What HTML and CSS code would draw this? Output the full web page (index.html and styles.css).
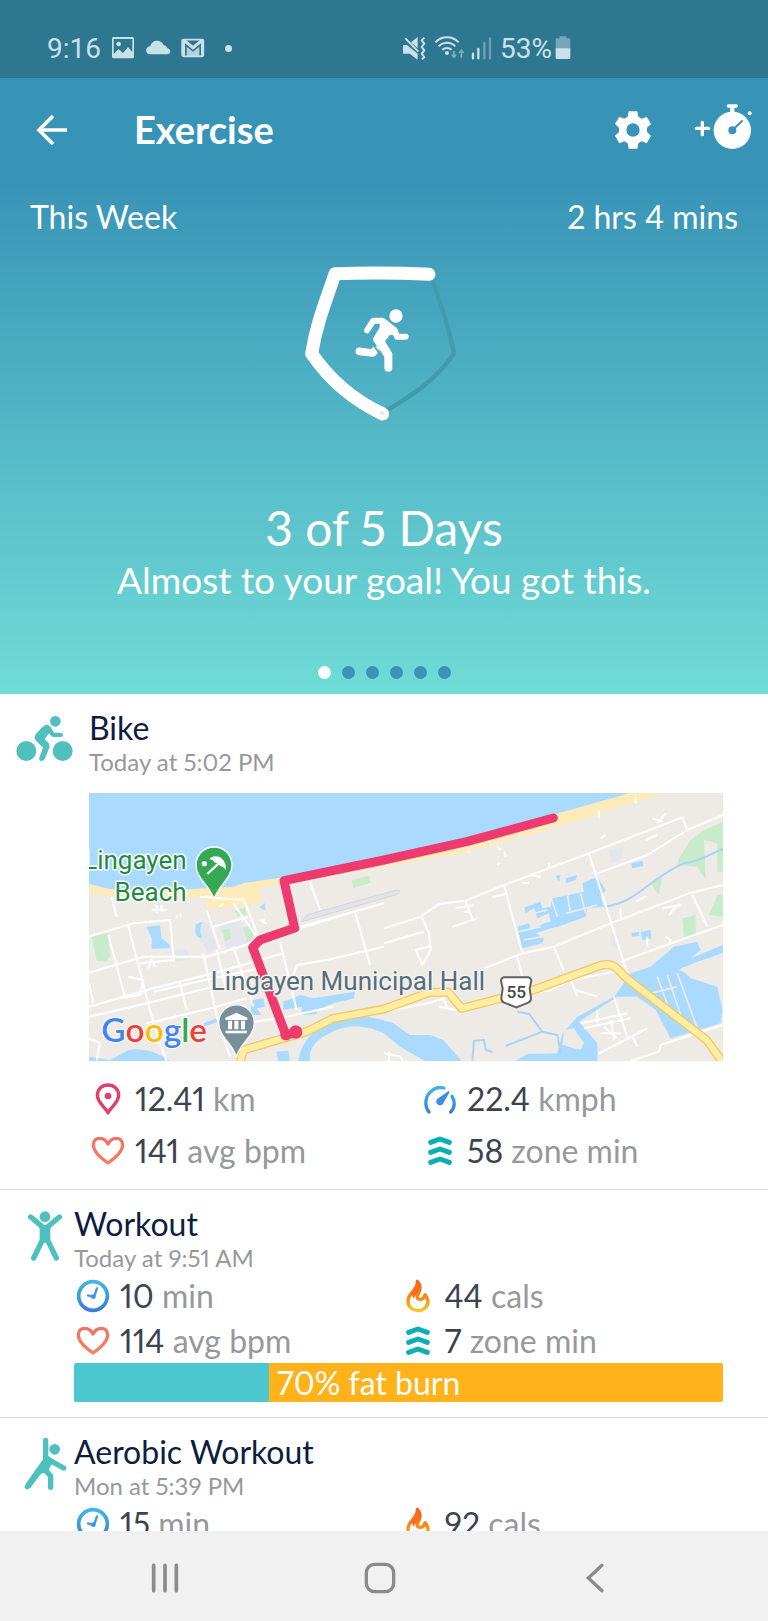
FILE: index.html
```html
<!DOCTYPE html>
<html lang="en">
<head>
    <meta charset="UTF-8">
    <meta name="viewport" content="width=device-width, initial-scale=1.0">
    <title>Exercise</title>
    <link rel="stylesheet" href="styles.css">
</head>
<body>
    <!-- Shared icons and gradients -->
    <svg class="sprite" aria-hidden="true">
        <defs>
            <linearGradient id="blueGrad" x1="0" y1="0" x2="0" y2="1">
                <stop offset="0" stop-color="#41b4ec"/>
                <stop offset="1" stop-color="#3a7fd6"/>
            </linearGradient>
            <linearGradient id="fireGrad" x1="0" y1="0" x2="0" y2="1">
                <stop offset="0" stop-color="#f8601c"/>
                <stop offset="0.6" stop-color="#fb8c14"/>
                <stop offset="1" stop-color="#fcc41e"/>
            </linearGradient>
            <linearGradient id="heartGrad" x1="0" y1="0" x2="0" y2="1">
                <stop offset="0" stop-color="#ee7466"/>
                <stop offset="1" stop-color="#f9805c"/>
            </linearGradient>
        </defs>
        <symbol id="icon-clock" viewBox="0 0 114 114">
            <circle cx="57" cy="57" r="43" fill="none" stroke="url(#blueGrad)" stroke-width="11"/>
            <path d="M69 34L60 60L42 55" fill="none" stroke="#3f9be3" stroke-width="7" stroke-linecap="round" stroke-linejoin="round"/>
            <circle cx="58" cy="59" r="7" fill="#3f93e0"/>
        </symbol>
        <symbol id="icon-heart" viewBox="0 0 114 114">
            <path d="M57 93C44 84 13 62 13 39C13 26 21 19 32 19C43 19 52 25 57 36C62 25 71 19 82 19C93 19 101 26 101 39C101 62 70 84 57 93Z" fill="none" stroke="url(#heartGrad)" stroke-width="10" stroke-linejoin="round"/>
        </symbol>
        <symbol id="icon-zone" viewBox="0 0 114 114">
            <path d="M29 31L57 21L85 31M29 61L57 51L85 61M29 91L57 81L85 91" fill="none" stroke="#0aafb6" stroke-width="15" stroke-linecap="round" stroke-linejoin="round"/>
        </symbol>
        <symbol id="icon-fire" viewBox="0 0 114 114">
            <path d="M55 13C57 29 47 38 37 49C30 57 27 65 27 73C27 90 41 101 57 101C74 101 87 89 87 73C87 65 83 59 78 53C76 64 69 68 61 67C52 65 53 57 58 50C65 40 66 24 55 13Z" fill="none" stroke="url(#fireGrad)" stroke-width="10" stroke-linejoin="round"/>
            <path d="M55 13C57 29 47 38 37 49L44 65C48 53 57 50 60 42C65 32 62 20 55 13Z" fill="#f96c1a"/>
        </symbol>
        <symbol id="icon-pin" viewBox="0 0 114 114">
            <path d="M57 99C51 83 25 69 25 46C25 27 40 15 57 15C74 15 89 27 89 46C89 69 63 83 57 99Z" fill="none" stroke="#de3f6d" stroke-width="10" stroke-linejoin="round"/>
            <circle cx="57" cy="48" r="10" fill="#de3f6d"/>
        </symbol>
        <symbol id="icon-speed" viewBox="0 0 114 114">
            <path d="M24 96C10 78 12 52 27 37C39 25 54 20 69 24M93 49C103 64 102 83 89 96" fill="none" stroke="url(#blueGrad)" stroke-width="10" stroke-linecap="round"/>
            <path d="M83 36L66 66A9 9 0 1 1 51 58Z" fill="#3f8fe0" stroke="#3f8fe0" stroke-width="5" stroke-linejoin="round"/>
        </symbol>
    </svg>

    <header class="hero">
        <!-- Status bar -->
        <div class="status-bar">
            <div class="status-group status-left">
                <span>9:16</span>
                <svg width="24" height="24" viewBox="0 0 72 72">
                    <path fill="currentColor" fill-rule="evenodd" d="M6 3H64Q69 3 69 8V62Q69 67 64 67H8Q3 67 3 62V8Q3 3 8 3ZM8 9V54L23 39L36 51L51 33L64 48V9Z"/>
                    <circle cx="23" cy="24" r="7" fill="currentColor"/>
                </svg>
                <svg width="26" height="24" viewBox="0 0 78 72">
                    <path fill="currentColor" d="M16 55C-1 55 0 31 16 31C20 9 50 9 56 28C64 28 65 33 66 36C80 38 78 55 66 55Z"/>
                </svg>
                <svg width="24" height="24" viewBox="0 0 72 72">
                    <rect x="4" y="11" width="63" height="50" rx="4" fill="none" stroke="currentColor" stroke-width="5"/>
                    <path fill="currentColor" d="M2 10H12L36 29L60 10H68V60H60V22L36 41L12 22V60H2Z"/>
                    <path fill="currentColor" d="M17 32L36 47L55 32V62H17Z" opacity="0.85"/>
                </svg>
                <span class="status-dot"></span>
            </div>
            <div class="status-group status-right">
                <svg width="26" height="26" viewBox="0 0 78 78">
                    <path fill="currentColor" d="M6 30H18L50 56V74L26 56H6ZM30 22L50 6V40Z"/>
                    <path d="M13 10L52 50" stroke="currentColor" stroke-width="6"/>
                    <path d="M70 8L62 16L70 26L62 36L70 46L62 56L70 66L63 73" fill="none" stroke="currentColor" stroke-width="6" stroke-linejoin="round"/>
                </svg>
                <svg width="30" height="26" viewBox="0 0 90 78">
                    <path d="M4 22C24 2 54 2 74 22M14 34C28 20 50 20 64 34M25 44C33 37 45 37 53 44" fill="none" stroke="currentColor" stroke-width="6"/>
                    <circle cx="39" cy="54" r="6" fill="currentColor"/>
                    <path d="M60 48V66M53 59L60 67L67 59M82 68V48M75 54L82 46L89 54" fill="none" stroke="currentColor" stroke-width="5" opacity="0.5"/>
                </svg>
                <svg width="22" height="26" viewBox="0 0 66 78">
                    <path d="M6 56V70M22 42V70" stroke="currentColor" stroke-width="7" stroke-linecap="round"/>
                    <path d="M40 24V70M57 10V70" stroke="currentColor" stroke-width="7" stroke-linecap="round" opacity="0.4"/>
                </svg>
                <span>53%</span>
                <svg class="battery" width="16" height="26" viewBox="0 0 48 78">
                    <path fill="currentColor" opacity="0.45" d="M14 4H34V10H43Q46 10 46 13V42H2V13Q2 10 5 10H14Z"/>
                    <path fill="currentColor" d="M2 40H46V68Q46 72 42 72H6Q2 72 2 68Z"/>
                </svg>
            </div>
        </div>

        <!-- App bar -->
        <div class="app-bar">
            <button class="back-btn" type="button" aria-label="Back">
                <svg width="32" height="32" viewBox="0 0 96 96">
                    <path d="M93 48H10M51 6L9 48L51 90" fill="none" stroke="currentColor" stroke-width="11"/>
                </svg>
            </button>
            <h1>Exercise</h1>
            <button type="button" aria-label="Settings">
                <svg width="38" height="38" viewBox="0 0 114 114">
                    <path fill="currentColor" fill-rule="evenodd" d="M44 1H70L73 17L83 23L98 17L111 39L99 50V63L111 74L98 97L83 91L73 97L70 113H44L41 97L31 91L16 97L3 74L15 63V50L3 39L16 17L31 23L41 17ZM57 37A20 20 0 1 0 57 77A20 20 0 1 0 57 37Z"/>
                </svg>
            </button>
            <button class="timer-btn" type="button" aria-label="Start exercise">
                <svg width="58" height="48" viewBox="930 308 174 144">
                    <path d="M937 384H974M955 366V403M1033 317H1057" stroke="currentColor" stroke-width="10" stroke-linecap="round"/>
                    <path d="M1045 316V340" stroke="currentColor" stroke-width="13"/>
                    <circle cx="1045" cy="390" r="56" fill="currentColor"/>
                    <circle cx="1097" cy="339" r="6" fill="currentColor"/>
                    <path d="M1045 390L1074 362" stroke="#3894b7" stroke-width="6" stroke-linecap="round"/>
                    <circle cx="1045" cy="390" r="12" fill="#3894b7"/>
                </svg>
            </button>
        </div>

        <!-- Weekly goal -->
        <div class="week-row">
            <span>This Week</span>
            <span>2 hrs 4 mins</span>
        </div>
        <div class="goal">
            <svg width="200" height="200" viewBox="13 0 600 600" role="img" aria-label="3 of 5 days completed">
                <path d="M452 104C480 180 505 250 523 341C460 430 390 470 307 520" fill="none" stroke="#429bad" stroke-width="13" stroke-linejoin="round"/>
                <path d="M448 103C350 98 260 98 166 101C140 180 110 250 96 341C150 420 220 480 309 522" fill="none" stroke="#fff" stroke-width="39" stroke-linecap="round" stroke-linejoin="round"/>
                <circle cx="307" cy="519" r="6" fill="#e4e6e6"/>
                <circle cx="349" cy="228" r="20" fill="#fff"/>
                <path d="M262 271L281 242H308L345 271L352 290H378" fill="none" stroke="#fff" stroke-width="18" stroke-linecap="round" stroke-linejoin="round"/>
                <path d="M300 240L320 240L352 266L348 286L330 285L316 304L338 340V383A12 12 0 0 1 314 383V350L281 302Q278 297 283 290L300 262Z" fill="#fff"/>
                <path d="M239 334L279 339L287 330" fill="none" stroke="#fff" stroke-width="23" stroke-linecap="round" stroke-linejoin="round"/>
                <path d="M279 312L302 344" stroke="#4bacc1" stroke-width="6"/>
            </svg>
            <h2>3 of 5 Days</h2>
            <p>Almost to your goal! You got this.</p>
        </div>
        <div class="dots">
            <span class="active"></span>
            <span></span>
            <span></span>
            <span></span>
            <span></span>
            <span></span>
        </div>
    </header>

    <!-- Exercise log -->
    <main class="log">
        <article class="entry entry-map">
            <svg class="entry-icon" viewBox="48 57 174 180">
                <g fill="#4fc0be">
                    <circle cx="79" cy="183" r="30"/>
                    <circle cx="188" cy="183" r="30"/>
                    <circle cx="166" cy="94" r="16"/>
                    <path d="M108 131L130 109Q142 99 152 111L162 128H183Q189 129 189 135Q189 141 183 141H157L147 130L134 147L146 160Q151 166 148 173L134 207Q131 213 124 213Q116 212 118 203L129 173L108 152Q100 141 108 131Z"/>
                </g>
            </svg>
            <div class="entry-body">
                <h3>Bike</h3>
                <p class="when">Today at 5:02 PM</p>
                <svg class="map" viewBox="267 309 1902 804" role="img" aria-label="Route map">
                    <rect x="267" y="309" width="1902" height="804" fill="#eeebe7"/>
                    <!-- sea and beach -->
                    <path fill="#fdebb9" d="M267 309H1990L1905 338L1680 408L1400 486L1240 515L860 580L782 592L778 640L700 650L630 660L612 622L400 622L330 618L267 610Z"/>
                    <path fill="#aadaff" d="M267 309H1890L1680 368L1400 450L1152 496L850 562L735 578L700 590L560 598L400 600L330 597L267 582Z"/>
                    <!-- parks and grey blocks -->
                    <path fill="#e3e6eb" d="M582 700L620 694L655 770L625 790L595 740ZM655 705L720 690L745 760L680 775ZM525 780L560 776L570 808L525 815Z"/>
                    <path fill="#c8eccb" d="M275 738L325 728L330 800L318 815L290 812ZM1055 570L1108 557L1112 578L1060 594ZM705 662L735 652L740 675L712 680ZM728 712L755 706L762 750L742 755ZM668 718L688 714L694 745L675 755Z"/>
                    <g transform="translate(1152 270)">
                        <path fill="#c8eccb" d="M885 235L920 180L960 150L1017 125V275H1000V190L960 180L965 300L940 260L880 255ZM800 310L835 290L825 345ZM895 415L935 405V470H900ZM975 405L1000 345L1017 345V410Z"/>
                        <path fill="#e3e6eb" d="M675 208L718 200L710 245L680 250ZM680 465L700 460V505L682 500Z"/>
                    </g>
                    <!-- water inland -->
                    <g fill="#aadaff">
                        <path d="M440 710L480 706L485 745L510 765L508 775L455 776L455 745ZM588 705Q608 690 606 700Q596 720 606 745Q588 745 585 720ZM778 652L795 640L797 662Z"/>
                        <path d="M267 1113V1100L330 1110L385 1080Q450 1070 510 1113ZM895 1113C905 1040 970 985 1060 980C1100 975 1152 990 1180 1000L1230 1035L1290 1035L1330 1050L1385 1113H1275L1200 1070L1152 1030C1090 1000 1030 1005 990 1030C945 1050 925 1080 930 1113Z"/>
                        <path d="M755 930L790 925L795 950L770 955L785 975L750 975ZM850 935L900 915L940 925L1065 905L1062 925L1000 940L955 958L950 972L905 975V950L850 960ZM610 1000L650 985L655 995L615 1008ZM830 1085L865 1082L870 1113H835Z"/>
                        <g transform="translate(1152 270)">
                            <path d="M395 843L430 822L520 820L535 760L580 710L690 650L740 580L800 560L870 500L940 485L950 510L920 535L1017 495V520L890 565L920 595L1000 620L1015 690L1010 730L860 775L815 690L760 650L700 650L585 725L640 790V843Z"/>
                            <path d="M400 440L435 430L440 450L480 430L500 425L495 400L460 415L450 385L425 400L422 382L470 365L475 385L500 380L505 355L600 335L595 310L640 290L665 330L650 350L660 380L610 385L605 410L520 440L500 445L455 460L480 475L475 490L415 505ZM545 295L580 285L575 300L545 310ZM515 288L530 285L525 305ZM742 250L775 242L778 258L745 265ZM742 460L765 455V468L745 470ZM770 455L800 450L802 475L775 480Z"/>
                        </g>
                    </g>
                    <g transform="translate(1152 270)">
                        <path d="M660 380C760 370 800 290 900 250C950 245 980 220 1017 207M400 695L435 702L475 755L365 798M475 755L520 765L530 820M265 843L270 782L300 780L305 810L325 815" fill="none" stroke="#a8d4f7" stroke-width="6"/>
                        <path fill="#eeebe7" d="M885 570L940 545L1017 520V625L950 600ZM540 750L570 745L600 790L590 810L535 795Z"/>
                        <path d="M405 455L470 440M500 350L520 410M550 345L560 400M420 480L475 470M430 405L490 390M545 400L640 375M590 340L605 400M820 590L860 700M850 585L890 705M880 580L940 745M800 640L880 620" fill="none" stroke="#eeebe7" stroke-width="5"/>
                    </g>
                    <!-- airstrip -->
                    <path d="M905 695L920 675L1190 600L1200 604L1190 614Z" fill="#e3e3e8" stroke="#d4d6de" stroke-width="3"/>
                    <!-- streets -->
                    <g fill="none" stroke="#fff" stroke-width="6" stroke-linejoin="round">
                        <path d="M267 740L400 700L510 690L522 815M335 620L350 680M385 708L450 960L480 1060L500 1113M325 735L375 920M267 848L430 800L620 800L790 750M620 660L660 780M700 640L770 740M730 625L775 740M640 710L745 680M600 620L730 630M267 950L460 895L640 850L850 790"/>
                        <path d="M460 905L640 865L800 830M420 820L520 810M267 980L440 940L640 890M360 925L420 915L430 870L385 860M540 880L560 960M610 790L650 980L690 1100M470 995L650 950L740 925M440 1000L610 960M650 780L680 905M700 770L760 950M267 880L280 940M290 1110L300 1060L267 1045"/>
                        <path d="M770 750L900 715L1065 665L1110 825M840 755L890 960M900 710L1152 640M880 860L890 825L980 810L1152 770M740 1000L860 980L1000 950M930 575L960 660M660 650L670 640M455 660H500M470 645V670M485 645V665M530 675V685M542 672V682M780 690L800 700M795 685L790 700M445 835L455 810L465 830"/>
                    </g>
                    <g transform="translate(1152 270)" fill="none" stroke="#fff" stroke-width="6" stroke-linejoin="round">
                        <path d="M0 445L110 410L165 372L245 362L360 315L615 220L895 112L910 150L1017 105M360 315L415 520L300 565M615 220L730 580M640 280L790 225L910 150M415 520L510 500L680 430L915 340L1017 315M925 345L970 440M710 545L860 490L1017 435M510 500L540 575M400 530L415 590"/>
                        <path d="M110 405L135 460L140 510L115 555L95 510L135 500M0 490L120 455M325 352L365 342M245 365L265 415M215 385L270 375M205 440L280 415M240 395H260M470 290L440 285M415 310L435 308M340 200L350 210M340 255L345 248M645 90V115M755 55V70M820 130L845 100M805 115L835 125M785 180L820 165M255 210V220M360 215L365 230M650 175L665 165M495 250V265M835 385L890 375M855 405L885 370M755 365L785 350M710 385V415M790 500V470M845 470L860 480L855 495"/>
                        <path d="M0 695L130 670L200 650M165 680L215 690M180 660L190 685M415 645L500 630L560 600L690 575M560 600L580 650M575 630L640 650M590 730L730 700M600 745L740 715M645 820L790 745M690 650L730 770M660 740L700 775M640 690V730M740 843L825 815L830 795L1015 735M650 760H710M680 720L690 780M745 770L760 800M0 820L50 830L55 843M15 815V843"/>
                    </g>
                    <!-- highway -->
                    <path d="M722 1113L730 1080L850 1045L920 1025L1000 985L1152 957L1290 907L1345 907L1385 955L1600 900L1790 830Q1830 815 1850 835L1880 865L2120 1050L2165 1113" fill="none" stroke="#efc964" stroke-width="27" stroke-linejoin="round"/>
                    <path d="M722 1113L730 1080L850 1045L920 1025L1000 985L1152 957L1290 907L1345 907L1385 955L1600 900L1790 830Q1830 815 1850 835L1880 865L2120 1050L2165 1113" fill="none" stroke="#ffeea2" stroke-width="19" stroke-linejoin="round"/>
                    <!-- route -->
                    <path d="M1660 384L1400 455L1152 510L852 572L884 714L780 750L758 772L858 1036L888 1026" fill="none" stroke="#ee3b6f" stroke-width="27" stroke-linecap="round" stroke-linejoin="round"/>
                    <circle cx="858" cy="1034" r="17" fill="#ee3b6f"/>
                    <circle cx="887" cy="1026" r="20" fill="#ee3b6f"/>
                    <!-- labels -->
                    <g class="map-label beach" text-anchor="end">
                        <text x="560" y="538">Lingayen</text>
                        <text x="560" y="632">Beach</text>
                    </g>
                    <text class="map-label hall" x="632" y="899">Lingayen Municipal Hall</text>
                    <path d="M642 628C632 590 588 565 588 525A54 54 0 0 1 696 525C696 565 652 590 642 628Z" fill="#34a853" stroke="#fff" stroke-width="4"/>
                    <path d="M628 508C640 490 680 498 678 540Q668 528 660 528Q652 516 644 518Q638 508 628 508Z" fill="#fff"/>
                    <path d="M656 520L622 552" stroke="#fff" stroke-width="7"/>
                    <circle cx="613" cy="521" r="8" fill="#fff"/>
                    <path d="M709 1102C700 1062 656 1040 656 998A53 53 0 0 1 763 998C763 1040 718 1062 709 1102Z" fill="#78909c" stroke="#fff" stroke-width="4"/>
                    <path d="M676 990V983L709 968L742 983V990ZM684 992H696V1018H684ZM703 992H715V1018H703ZM723 992H735V1018H723ZM677 1022H741V1030H677Z" fill="#fff"/>
                    <path d="M1510 862H1586Q1594 865 1594 873L1589 895L1593 925Q1593 935 1585 938L1549 952L1512 938Q1504 935 1504 925L1508 895L1503 873Q1503 865 1510 862Z" fill="#fff" stroke="#5f6368" stroke-width="6"/>
                    <text class="map-road" x="1549" y="925" text-anchor="middle">55</text>
                    <text class="map-logo" x="304" y="1056"><tspan fill="#4285f4">G</tspan><tspan fill="#ea4335">o</tspan><tspan fill="#fbbc05">o</tspan><tspan fill="#4285f4">g</tspan><tspan fill="#34a853">l</tspan><tspan fill="#ea4335">e</tspan></text>
                </svg>
                <ul class="stats">
                    <li><svg><use href="#icon-pin"/></svg><span><b>12.41</b> km</span></li>
                    <li><svg><use href="#icon-speed"/></svg><span><b>22.4</b> kmph</span></li>
                    <li><svg><use href="#icon-heart"/></svg><span><b>141</b> avg bpm</span></li>
                    <li><svg><use href="#icon-zone"/></svg><span><b>58</b> zone min</span></li>
                </ul>
            </div>
        </article>

        <article class="entry">
            <svg class="entry-icon" viewBox="47 431 174 180">
                <circle cx="134" cy="466" r="16" fill="#4fc0be"/>
                <path d="M91 467L124 495M177 467L144 495M127 535L100 590M141 535L168 590" stroke="#4fc0be" stroke-width="16" stroke-linecap="round"/>
                <path d="M112 484L122 491H146L156 484L150 504V536L134 545L118 536V504Z" fill="#4fc0be"/>
            </svg>
            <div class="entry-body">
                <h3>Workout</h3>
                <p class="when">Today at 9:51 AM</p>
                <ul class="stats">
                    <li><svg><use href="#icon-clock"/></svg><span><b>10</b> min</span></li>
                    <li><svg><use href="#icon-fire"/></svg><span><b>44</b> cals</span></li>
                    <li><svg><use href="#icon-heart"/></svg><span><b>114</b> avg bpm</span></li>
                    <li><svg><use href="#icon-zone"/></svg><span><b>7</b> zone min</span></li>
                </ul>
                <div class="zones">
                    <div class="zone-low" style="width: 30%"></div>
                    <div class="zone-burn">70% fat burn</div>
                </div>
            </div>
        </article>

        <article class="entry">
            <svg class="entry-icon" viewBox="47 395 174 180">
                <circle cx="163" cy="444" r="16" fill="#4fc0be"/>
                <path d="M136 417V472M150 478L190 500M81 556L124 502M136 508L151 524V558" fill="none" stroke="#4fc0be" stroke-width="16" stroke-linecap="round" stroke-linejoin="round"/>
                <path d="M128 464H144L164 478L148 498L146 510L120 518L90 560L76 548L128 474Z" fill="#4fc0be"/>
            </svg>
            <div class="entry-body">
                <h3>Aerobic Workout</h3>
                <p class="when">Mon at 5:39 PM</p>
                <ul class="stats">
                    <li><svg><use href="#icon-clock"/></svg><span><b>15</b> min</span></li>
                    <li><svg><use href="#icon-fire"/></svg><span><b>92</b> cals</span></li>
                </ul>
            </div>
        </article>
    </main>

    <!-- System navigation -->
    <nav class="system-nav">
        <button type="button" aria-label="Recent apps">
            <svg width="32" height="32" viewBox="0 0 96 96">
                <path d="M14 10V86M48 10V86M82 10V86" stroke="currentColor" stroke-width="11" stroke-linecap="round"/>
            </svg>
        </button>
        <button type="button" aria-label="Home">
            <svg width="32" height="32" viewBox="0 0 96 96">
                <rect x="7" y="7" width="82" height="82" rx="25" fill="none" stroke="currentColor" stroke-width="10"/>
            </svg>
        </button>
        <button type="button" aria-label="Back">
            <svg width="32" height="32" viewBox="0 0 96 96">
                <path d="M69 10L28 48L69 86" fill="none" stroke="currentColor" stroke-width="10" stroke-linecap="round"/>
            </svg>
        </button>
    </nav>
</body>
</html>
```
FILE: styles.css
```css
/* Basic Reset */
* {
    margin: 0;
    padding: 0;
    box-sizing: border-box;
}

body {
    display: flex;
    flex-direction: column;
    height: 100vh;
    font-family: Lato, "Open Sans", sans-serif;
    font-size: 32px;
    font-variant-numeric: proportional-nums;
    color: #0d1d42;
    background: #fff;
}

svg {
    display: block;
    flex-shrink: 0;
}

button {
    border: none;
    background: none;
    color: inherit;
    cursor: pointer;
}

.sprite {
    position: absolute;
    width: 0;
    height: 0;
}

/* Header */
.hero {
    flex-shrink: 0;
    padding-bottom: 15px;
    background: linear-gradient(#3894b7 26%, #70dcd6);
    color: #fff;
}

/* Status bar */
.status-bar {
    display: flex;
    justify-content: space-between;
    height: 78px;
    padding: 18px 197px 0 47px;
    background: #2e7790;
    color: #cbe1ea;
    font-family: Roboto, sans-serif;
    font-size: 28px;
    font-variant-numeric: normal;
}

.status-group {
    display: flex;
    align-items: center;
}

.status-left {
    gap: 10px;
}

.status-right {
    gap: 7px;
}

.status-dot {
    width: 7px;
    height: 7px;
    margin-left: 10px;
    border-radius: 50%;
    background: #cbe1ea;
}

.battery {
    margin-left: -4px;
}

/* App bar */
.app-bar {
    display: flex;
    align-items: center;
    height: 104px;
    padding: 0 16px 0 36px;
}

.app-bar h1 {
    flex: 1;
    margin-left: 66px;
    padding-bottom: 2px;
    font-size: 38px;
    font-weight: 700;
    line-height: 44px;
}

.timer-btn {
    margin-left: 42px;
    padding-bottom: 6px;
}

/* Weekly goal */
.week-row {
    display: flex;
    justify-content: space-between;
    padding: 15px 30px 3px;
    line-height: 40px;
}

.goal {
    text-align: center;
}

.goal svg {
    margin: 0 auto 60px;
}

.goal h2 {
    font-size: 48px;
    font-weight: 400;
    line-height: 56px;
}

.goal p {
    padding-top: 2px;
    font-size: 37px;
    line-height: 44px;
}

.dots {
    display: flex;
    justify-content: center;
    gap: 11px;
    margin-top: 64px;
}

.dots span {
    width: 13px;
    height: 13px;
    border-radius: 50%;
    background: #3894b7;
}

.dots .active {
    background: #fff;
}

/* Exercise log */
.log {
    flex: 1;
    min-height: 0;
    overflow: hidden;
}

.entry {
    display: flex;
    padding: 15px 45px 15px 16px;
    border-bottom: 1px solid #d9d9d9;
}

.entry-icon {
    width: 58px;
    height: 60px;
}

.entry-body {
    flex: 1;
    min-width: 0;
}

.entry h3 {
    font-size: 32px;
    font-weight: 400;
    line-height: 38px;
}

.when {
    color: #96989c;
    font-size: 24px;
    line-height: 30px;
}

.stats {
    display: grid;
    grid-template-columns: 1fr 1fr;
    list-style: none;
    color: #96989c;
    line-height: 45px;
}

.stats li {
    display: flex;
    align-items: center;
    gap: 8px;
}

.stats svg {
    width: 38px;
    height: 38px;
}

.stats b {
    color: #3c4350;
    font-weight: 400;
}

/* Entry with a route map */
.entry-map {
    padding-right: 15px;
    padding-bottom: 12px;
}

.entry-map .entry-body {
    margin-left: 15px;
}

.entry-map .map {
    width: calc(100% - 30px);
    margin: 16px 0 12px;
}

.entry-map .stats {
    line-height: 52px;
}

.map-label {
    font-family: Roboto, sans-serif;
    font-size: 78px;
    paint-order: stroke;
    stroke: #fff;
    stroke-width: 9px;
    stroke-linejoin: round;
}

.beach {
    fill: #1e8a45;
}

.hall {
    fill: #546e7a;
    stroke: #f4f2ef;
}

.map-road {
    font-family: Roboto, sans-serif;
    font-size: 52px;
    font-weight: 500;
    fill: #46484c;
}

.map-logo {
    font-family: Lato, sans-serif;
    font-size: 100px;
    font-weight: 600;
    paint-order: stroke;
    stroke: #fff;
    stroke-width: 6px;
}

/* Heart rate zones */
.zones {
    display: flex;
    height: 39px;
    border-radius: 2px;
    overflow: hidden;
    line-height: 39px;
    color: #fff;
}

.zone-low {
    background: #4dc7cf;
}

.zone-burn {
    flex: 1;
    padding-left: 8px;
    background: #ffb21a;
}

/* System navigation */
.system-nav {
    display: grid;
    grid-template-columns: repeat(3, 1fr);
    flex-shrink: 0;
    height: 90px;
    padding: 4px 65px 0 57px;
    background: #f1f1f1;
    color: #8b8b8b;
}

.system-nav button {
    display: flex;
    align-items: center;
    justify-content: center;
}
```
